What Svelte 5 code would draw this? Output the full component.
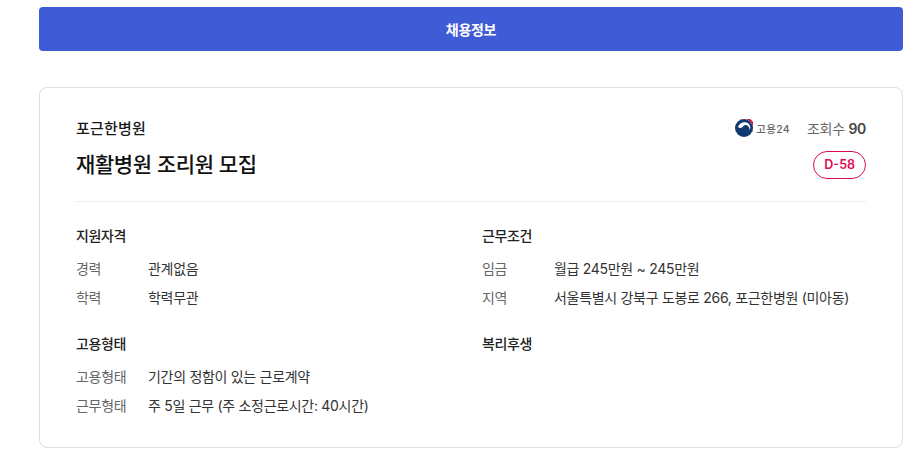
<script>
    const sections = [
        [
            { title: '지원자격', rows: [['경력', '관계없음'], ['학력', '학력무관']] },
            { title: '고용형태', rows: [['고용형태', '기간의 정함이 있는 근로계약'], ['근무형태', '주 5일 근무 (주 소정근로시간: 40시간)']] }
        ],
        [
            { title: '근무조건', rows: [['임금', '월급 245만원 ~ 245만원'], ['지역', '서울특별시 강북구 도봉로 266, 포근한병원 (미아동)']] },
            { title: '복리후생', rows: [] }
        ]
    ];
</script>

<div class="page">
    <button class="tab">채용정보</button>

    <section class="card">
        <header class="head">
            <div class="head-top">
                <span class="company">포근한병원</span>
                <div class="meta">
                    <span class="source">
                        <svg width="18" height="18" viewBox="0 0 18 18">
                            <circle cx="9" cy="9" r="9" fill="#123a72" />
                            <path d="M4 1.5A9 9 0 0 1 16.8 13.5A7.6 7.6 0 0 0 4 1.5Z" fill="#d2153c" />
                            <path d="M3 8C4 4.5 8 2.5 11.5 3.5C15 4.6 16.2 8.5 14.6 11.5C15 8.5 13 6 10.5 6C8.5 6 8 7.5 7 8.5C5.5 9.5 4 9 3 8Z" fill="#fff" />
                        </svg>
                        <span class="source-name">고용24</span>
                    </span>
                    <span class="views">조회수 <b>90</b></span>
                </div>
            </div>
            <div class="head-main">
                <h1>재활병원 조리원 모집</h1>
                <span class="dday">D-58</span>
            </div>
        </header>

        <div class="grid">
            {#each sections as col}
                <div class="col">
                    {#each col as sec}
                        <div class="sec">
                            <h2>{sec.title}</h2>
                            {#each sec.rows as [k, v]}
                                <div class="row"><span class="k">{k}</span><span class="v">{v}</span></div>
                            {/each}
                        </div>
                    {/each}
                </div>
            {/each}
        </div>
    </section>
</div>

<style>
    :global(body) {
        background: #fff;
        font-family: Inter, "Noto Sans CJK KR", sans-serif;
    }

    .page {
        padding: 7px 20px 24px 39px;
    }

    .tab {
        display: block;
        width: 100%;
        height: 44px;
        border: 0;
        border-radius: 4px;
        background: #3f5bd6;
        color: #fff;
        font: 700 14px Inter, "Noto Sans CJK KR", sans-serif;
        letter-spacing: -.3px;
    }

    .card {
        margin-top: 36px;
        height: 361px;
        box-sizing: border-box;
        padding: 30px 36px 0;
        border: 1px solid #dedede;
        border-radius: 8px;
    }

    .head {
        padding-bottom: 22px;
        border-bottom: 1px solid #eeeeee;
    }

    .head-top, .head-main {
        display: flex;
        justify-content: space-between;
        align-items: center;
    }

    .head-top {
        height: 20px;
    }

    .company {
        margin-top: -2px;
        font-size: 15px;
        font-weight: 500;
        letter-spacing: .2px;
        color: #1a1a1a;
    }

    .meta {
        display: flex;
        align-items: center;
        gap: 17px;
    }

    .source {
        display: flex;
        align-items: center;
        gap: 3px;
    }

    .source-name {
        font-size: 10.5px;
        font-weight: 500;
        color: #666;
        letter-spacing: .3px;
    }

    .views {
        font-size: 14px;
        letter-spacing: -.3px;
        color: #666;
    }

    .views b {
        font-weight: 600;
        color: #444;
    }

    .head-main {
        margin-top: 13px;
    }

    h1 {
        margin: 0;
        font-size: 21px;
        font-weight: 500;
        line-height: 28px;
        letter-spacing: -.4px;
        color: #111;
    }

    .dday {
        box-sizing: border-box;
        height: 28px;
        padding: 0 10px;
        border: 1px solid #e00a55;
        border-radius: 14px;
        font-size: 12.5px;
        font-weight: 600;
        line-height: 26px;
        color: #e00a55;
    }

    .grid {
        display: grid;
        grid-template-columns: 406px 1fr;
        margin-top: 24px;
    }

    .sec {
        height: 108px;
    }

    h2 {
        margin: 0 0 7px;
        font-size: 14px;
        font-weight: 500;
        line-height: 20px;
        letter-spacing: -.4px;
        color: #222;
    }

    .row {
        display: flex;
        height: 29px;
        align-items: center;
        font-size: 14px;
        letter-spacing: -.3px;
    }

    .k {
        width: 72px;
        color: #666;
    }

    .v {
        color: #333;
    }
</style>
